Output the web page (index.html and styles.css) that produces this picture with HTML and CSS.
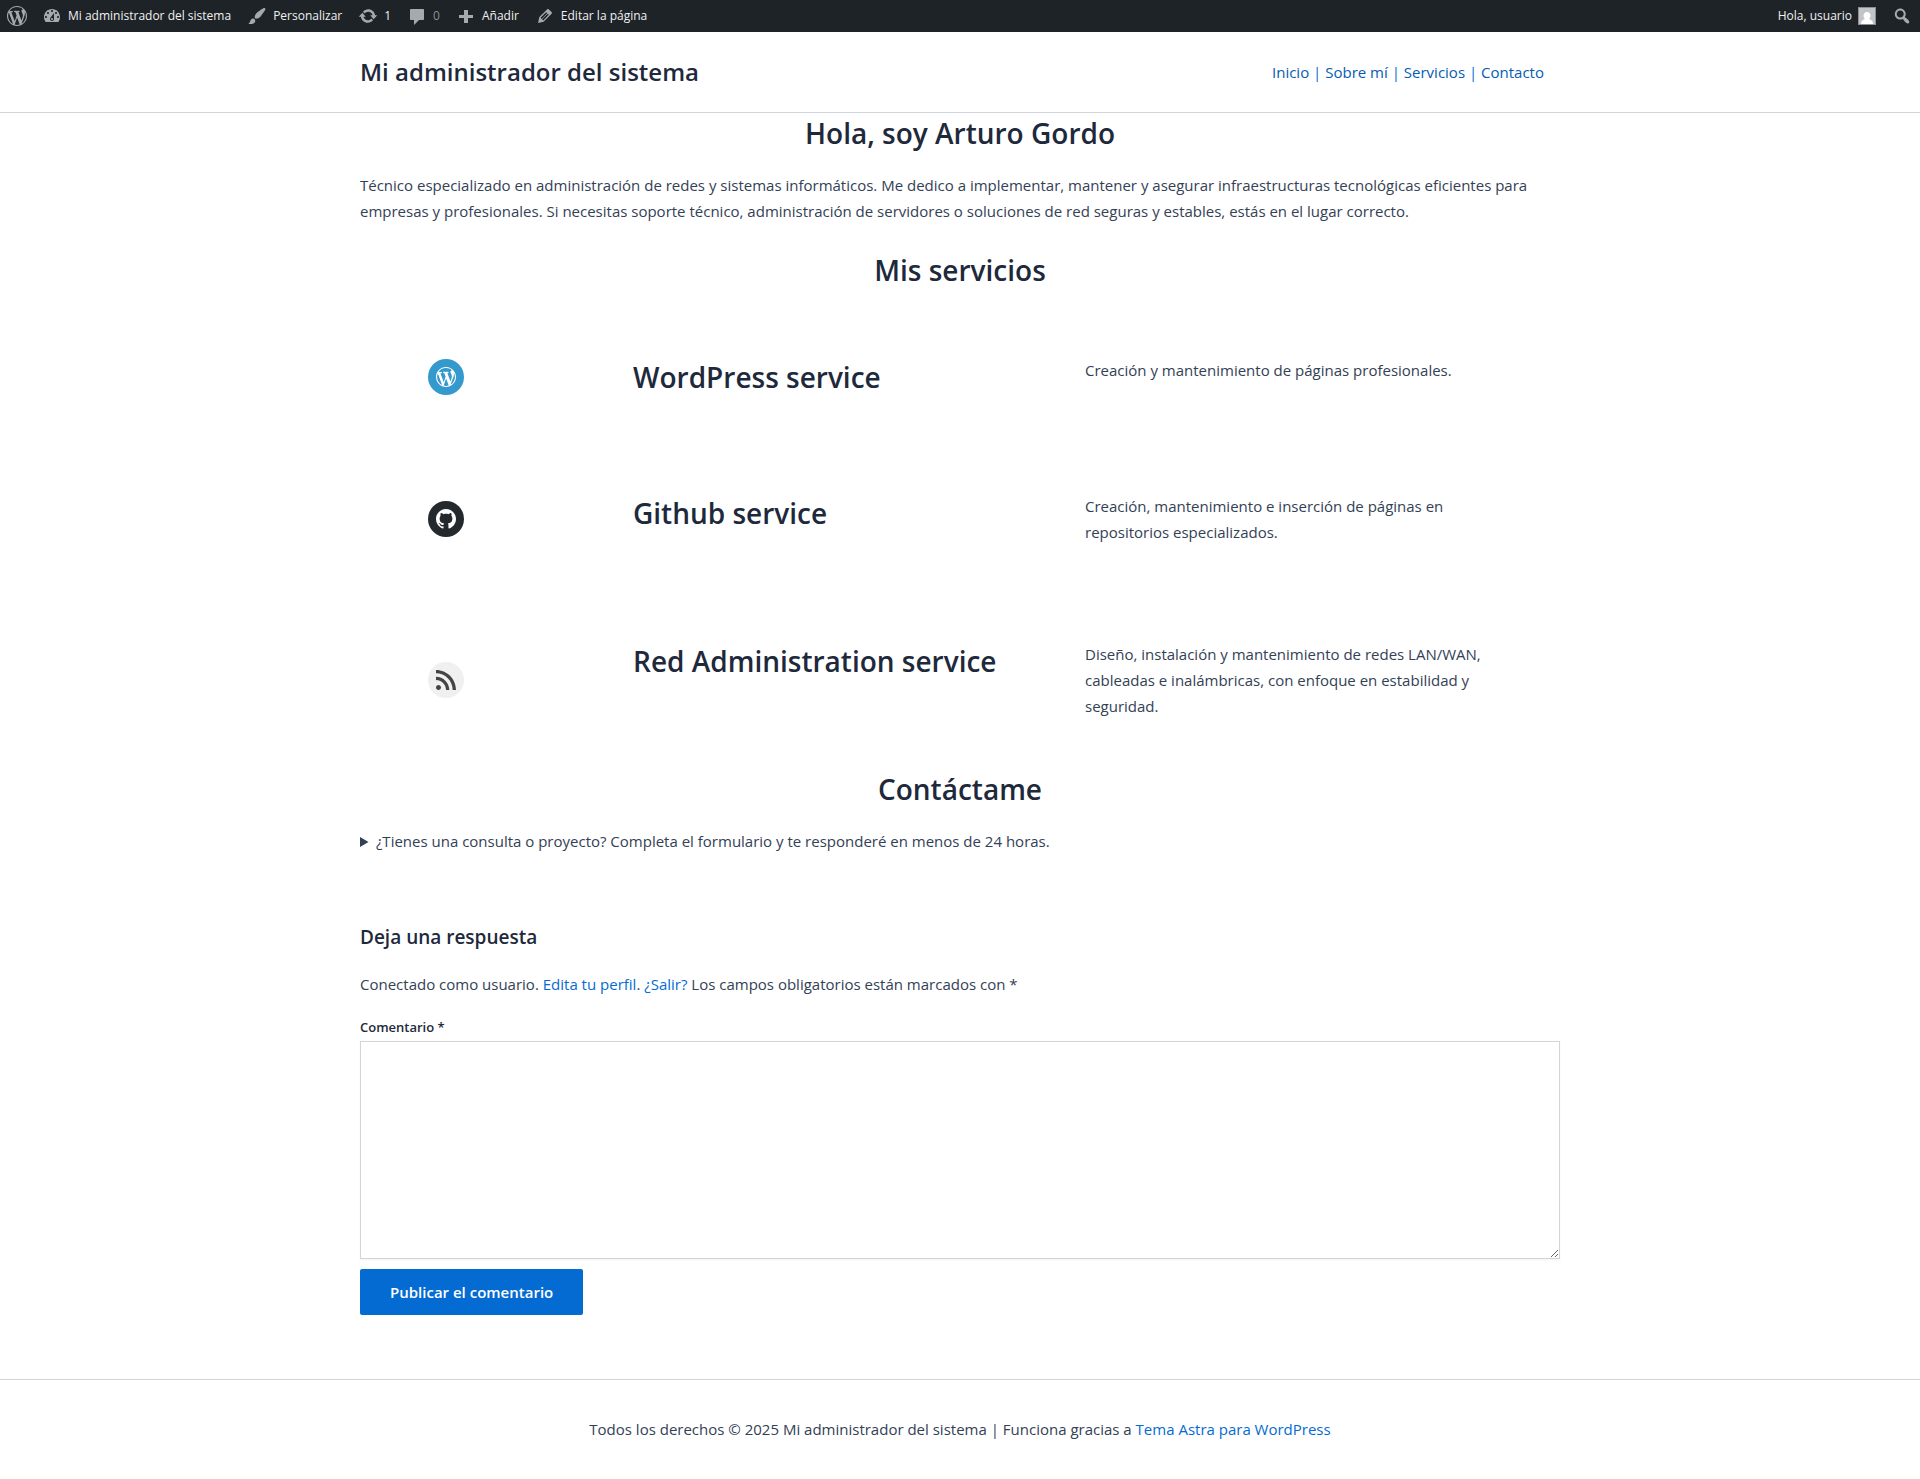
FILE: index.html
```html
<!DOCTYPE html>
<html lang="es">
<head>
<meta charset="utf-8">
<meta name="viewport" content="width=device-width, initial-scale=1">
<title>Mi administrador del sistema</title>
<link rel="stylesheet" href="styles.css">
</head>
<body>
<nav class="adminbar" aria-label="Barra de herramientas">
  <a class="adminbar-item adminbar-logo" href="#" aria-label="Acerca de WordPress"><svg class="adminbar-icon" viewBox="0 0 20 20"><path d="M20 10c0-5.51-4.49-10-10-10C4.48 0 0 4.49 0 10c0 5.52 4.48 10 10 10 5.51 0 10-4.48 10-10zM7.78 15.37L4.37 6.22c.55-.02 1.17-.08 1.17-.08.5-.06.44-1.13-.06-1.11 0 0-1.45.11-2.37.11-.18 0-.37 0-.58-.01C4.12 2.69 6.87 1.11 10 1.11c2.33 0 4.45.87 6.05 2.34-.68-.11-1.65.39-1.65 1.58 0 .74.45 1.36.9 2.1.35.61.55 1.36.55 2.46 0 1.49-1.4 5-1.4 5l-3.03-8.37c.54-.02.82-.17.82-.17.5-.05.44-1.25-.06-1.22 0 0-1.44.12-2.38.12-.87 0-2.33-.12-2.33-.12-.5-.03-.56 1.2-.06 1.22l.92.08 1.26 3.41zM17.41 10c.24-.64.74-1.87.43-4.25.7 1.29 1.05 2.71 1.05 4.25 0 3.29-1.73 6.24-4.4 7.78.97-2.59 1.94-5.2 2.92-7.78zM6.1 18.09C3.12 16.65 1.11 13.53 1.11 10c0-1.3.23-2.48.72-3.59C3.25 10.3 4.67 14.2 6.1 18.09zm4.03-6.63l2.58 6.98c-.86.29-1.76.45-2.71.45-.79 0-1.57-.11-2.29-.33.81-2.38 1.62-4.74 2.42-7.1z"/></svg></a>
  <a class="adminbar-item" href="#"><svg class="adminbar-icon" viewBox="0 0 20 20"><path fill-rule="evenodd" d="M3.76 16h12.48c1.1-1.37 1.76-3.11 1.76-5 0-4.42-3.58-8-8-8s-8 3.58-8 8c0 1.89.66 3.63 1.76 5zM10 4c.55 0 1 .45 1 1s-.45 1-1 1-1-.45-1-1 .45-1 1-1zM6 6c.55 0 1 .45 1 1s-.45 1-1 1-1-.45-1-1 .45-1 1-1zm8 0c.55 0 1 .45 1 1s-.45 1-1 1-1-.45-1-1 .45-1 1-1zm-5.37 5.55L12 7v6c0 1.1-.9 2-2 2s-2-.9-2-2c0-.57.24-1.08.63-1.45zM4 10c.55 0 1 .45 1 1s-.45 1-1 1-1-.45-1-1 .45-1 1-1zm12 0c.55 0 1 .45 1 1s-.45 1-1 1-1-.45-1-1 .45-1 1-1zm-5 3c0-.55-.45-1-1-1s-1 .45-1 1 .45 1 1 1 1-.45 1-1z"/></svg>Mi administrador del sistema</a>
  <a class="adminbar-item" href="#"><svg class="adminbar-icon" viewBox="0 0 20 20"><path d="M18.33 3.57s.27-.8-.31-1.36c-.53-.52-1.22-.24-1.22-.24-.61.3-5.76 3.47-7.67 5.57-.86.96-2.06 3.79-1.09 4.82.92.98 3.96-.17 4.79-1 2.06-2.06 5.21-7.17 5.5-7.79zM1.4 17.65c2.37-1.56 1.46-3.41 3.23-4.64.93-.65 2.22-.62 3.08.29.63.67.8 2.57-.16 3.46-1.57 1.45-4 1.55-6.15.89z"/></svg>Personalizar</a>
  <a class="adminbar-item" href="#"><svg class="adminbar-icon" viewBox="0 0 20 20"><path d="M10.2 3.28c3.53 0 6.43 2.61 6.92 6h2.08l-3.5 4-3.5-4h2.32c-.45-1.97-2.21-3.45-4.32-3.45-1.45 0-2.73.71-3.54 1.78L4.95 5.66C6.23 4.2 8.11 3.28 10.2 3.28zm-.4 13.44c-3.52 0-6.43-2.61-6.92-6H.8l3.5-4c1.17 1.33 2.33 2.67 3.5 4H5.48c.45 1.97 2.21 3.45 4.32 3.45 1.45 0 2.73-.71 3.54-1.78l1.71 1.95c-1.28 1.46-3.15 2.38-5.25 2.38z"/></svg>1</a>
  <a class="adminbar-item adminbar-item-muted" href="#"><svg class="adminbar-icon" viewBox="0 0 20 20"><path d="M4 3h12c.55 0 1 .45 1 1v9c0 .55-.45 1-1 1h-4l-5 5v-5H4c-.55 0-1-.45-1-1V4c0-.55.45-1 1-1z"/></svg>0</a>
  <a class="adminbar-item" href="#"><svg class="adminbar-icon" viewBox="0 0 20 20"><path d="M17 9v3h-5v5H8v-5H3V9h5V4h4v5z"/></svg>Añadir</a>
  <a class="adminbar-item" href="#"><svg class="adminbar-icon" viewBox="0 0 20 20"><path d="M13.89 3.39l2.71 2.72c.46.46.42 1.24.03 1.64l-8.01 8.02-5.56 1.16 1.16-5.58s7.6-7.63 7.99-8.03c.39-.39 1.22-.39 1.68.07zm-2.73 2.79l-5.59 5.61 1.11 1.11 5.54-5.65zm-2.97 8.23l5.58-5.6-1.07-1.08-5.59 5.6z"/></svg>Editar la página</a>
  <a class="adminbar-item adminbar-account" href="#">Hola, usuario<svg class="avatar" viewBox="0 0 18 18"><rect width="18" height="18" fill="#8c8f94"/><rect x="1" y="1" width="16" height="16" fill="#c3c4c7"/><path fill="#fff" d="M9 5c2 0 3.500 1.600 3.500 3.600 0 1.500-.6 2.700-1.500 3.400 2.400.7 4 2 4 5H3c0-3 1.600-4.300 4-5-.9-.7-1.500-1.900-1.500-3.400C5.500 6.600 7 5 9 5z"/></svg></a>
  <a class="adminbar-item" href="#" aria-label="Buscar"><svg class="adminbar-icon" viewBox="0 0 20 20"><path d="M12.140 4.180c1.870 1.870 2.110 4.750.72 6.890.12.1.22.21.36.31.2.16.47.36.81.59.34.24.56.39.66.47.42.31.73.57.94.78.32.32.6.65.84 1 .25.35.44.69.59 1.040.14.35.21.68.18 1-.02.32-.14.59-.36.81s-.49.34-.81.36c-.31.02-.65-.04-.99-.19-.35-.14-.7-.34-1.040-.59-.35-.24-.68-.52-1-.84-.21-.21-.47-.52-.77-.93-.1-.13-.25-.35-.47-.66-.22-.32-.4-.57-.56-.78-.16-.2-.29-.35-.44-.5-2.070 1.090-4.690.76-6.440-.98-2.140-2.150-2.140-5.640 0-7.780 2.150-2.150 5.630-2.150 7.780 0zm-1.410 6.360c1.360-1.370 1.360-3.580 0-4.950-1.370-1.370-3.590-1.370-4.950 0-1.370 1.370-1.370 3.580 0 4.950 1.360 1.370 3.580 1.370 4.950 0z"/></svg></a>
</nav>

<header class="site-header">
  <div class="container site-header-inner">
    <a class="site-title" href="#">Mi administrador del sistema</a>
    <nav class="site-nav" aria-label="Principal"><a href="#">Inicio</a> | <a href="#">Sobre mí</a> | <a href="#">Servicios</a> | <a href="#">Contacto</a></nav>
  </div>
</header>

<main class="container">
  <h2 class="section-title">Hola, soy Arturo Gordo</h2>
  <p class="intro">Técnico especializado en administración de redes y sistemas informáticos. Me dedico a implementar, mantener y asegurar infraestructuras tecnológicas eficientes para empresas y profesionales. Si necesitas soporte técnico, administración de servidores o soluciones de red seguras y estables, estás en el lugar correcto.</p>

  <h2 class="section-title">Mis servicios</h2>
  <div class="services">
    <div class="service">
      <a class="social social-wordpress" href="#" aria-label="WordPress"><svg viewBox="-2 -2 24 24"><path d="M20 10c0-5.51-4.49-10-10-10C4.48 0 0 4.49 0 10c0 5.52 4.48 10 10 10 5.51 0 10-4.48 10-10zM7.78 15.37L4.37 6.22c.55-.02 1.17-.08 1.17-.08.5-.06.44-1.13-.06-1.11 0 0-1.45.11-2.37.11-.18 0-.37 0-.58-.01C4.12 2.69 6.87 1.11 10 1.11c2.33 0 4.45.87 6.05 2.34-.68-.11-1.65.39-1.65 1.58 0 .74.45 1.36.9 2.1.35.61.55 1.36.55 2.46 0 1.49-1.4 5-1.4 5l-3.03-8.37c.54-.02.82-.17.82-.17.5-.05.44-1.25-.06-1.22 0 0-1.44.12-2.38.12-.87 0-2.33-.12-2.33-.12-.5-.03-.56 1.2-.06 1.22l.92.08 1.26 3.41zM17.41 10c.24-.64.74-1.87.43-4.25.7 1.29 1.05 2.71 1.05 4.25 0 3.29-1.73 6.24-4.4 7.78.97-2.59 1.94-5.2 2.92-7.78zM6.1 18.09C3.12 16.65 1.11 13.53 1.11 10c0-1.3.23-2.48.72-3.59C3.25 10.3 4.67 14.2 6.1 18.09zm4.03-6.63l2.58 6.98c-.86.29-1.76.45-2.71.45-.79 0-1.57-.11-2.29-.33.81-2.38 1.62-4.74 2.42-7.1z"/></svg></a>
      <h2 class="service-title">WordPress service</h2>
      <p class="service-text">Creación y mantenimiento de páginas profesionales.</p>
    </div>
    <div class="service">
      <a class="social social-github" href="#" aria-label="GitHub"><svg viewBox="0 0 24 24"><path d="M12,2C6.477,2,2,6.477,2,12c0,4.419,2.865,8.166,6.839,9.489c0.500,0.090,0.682-0.218,0.682-0.484c0-0.236-0.009-0.866-0.014-1.699c-2.782,0.602-3.369-1.340-3.369-1.340c-0.455-1.157-1.110-1.465-1.110-1.465c-0.909-0.620,0.069-0.608,0.069-0.608c1.004,0.071,1.532,1.030,1.532,1.030c0.891,1.529,2.341,1.089,2.910,0.833c0.091-0.647,0.349-1.086,0.635-1.337c-2.220-0.251-4.555-1.111-4.555-4.943c0-1.091,0.390-1.984,1.030-2.682C6.546,8.540,6.202,7.524,6.746,6.148c0,0,0.840-0.269,2.750,1.025C10.295,6.950,11.150,6.840,12,6.836c0.850,0.004,1.705,0.114,2.504,0.336c1.909-1.294,2.748-1.025,2.748-1.025c0.546,1.376,0.202,2.394,0.100,2.646c0.640,0.699,1.026,1.591,1.026,2.682c0,3.841-2.337,4.687-4.565,4.935c0.359,0.307,0.679,0.917,0.679,1.852c0,1.335-0.012,2.415-0.012,2.741c0,0.269,0.180,0.579,0.688,0.481C19.138,20.161,22,16.416,22,12C22,6.477,17.523,2,12,2z"/></svg></a>
      <h2 class="service-title">Github service</h2>
      <p class="service-text">Creación, mantenimiento e inserción de páginas en repositorios especializados.</p>
    </div>
    <div class="service">
      <a class="social social-feed" href="#" aria-label="Feed RSS"><svg viewBox="0 0 24 24"><path d="M2,8.667V12c5.515,0,10,4.485,10,10h3.333C15.333,14.637,9.363,8.667,2,8.667z M2,2v3.333c9.190,0,16.667,7.477,16.667,16.667H22C22,10.955,13.045,2,2,2z M4.500,17C3.118,17,2,18.120,2,19.500S3.118,22,4.500,22S7,20.880,7,19.500S5.882,17,4.500,17z"/></svg></a>
      <h2 class="service-title">Red Administration service</h2>
      <p class="service-text">Diseño, instalación y mantenimiento de redes LAN/WAN, cableadas e inalámbricas, con enfoque en estabilidad y seguridad.</p>
    </div>
  </div>

  <h2 class="section-title">Contáctame</h2>
  <details class="contact">
    <summary>¿Tienes una consulta o proyecto? Completa el formulario y te responderé en menos de 24 horas.</summary>
  </details>

  <section class="respond">
    <h3 class="respond-title">Deja una respuesta</h3>
    <form class="comment-form">
      <p class="logged-in">Conectado como usuario. <a href="#">Edita tu perfil</a>. <a href="#">¿Salir?</a> Los campos obligatorios están marcados con *</p>
      <label class="comment-label" for="comment">Comentario *</label>
      <textarea class="comment-box" id="comment" name="comment" rows="8" required></textarea>
      <button class="submit" type="submit">Publicar el comentario</button>
    </form>
  </section>
</main>

<footer class="site-footer">
  <p>Todos los derechos © 2025 Mi administrador del sistema | Funciona gracias a <a href="#">Tema Astra para WordPress</a></p>
</footer>
</body>
</html>
```
FILE: styles.css
```css
*, *::before, *::after { box-sizing: border-box; }

body {
  margin: 0;
  background: #fff;
  color: #334155;
  font: 15px/26px "Segoe UI", "Open Sans", "Noto Sans", sans-serif;
}

h2, h3, p { margin: 0; }
a { color: #046bd2; text-decoration: none; }

.container {
  max-width: 1240px;
  margin: 0 auto;
  padding: 0 20px;
}

.adminbar {
  display: flex;
  height: 32px;
  background: #1d2327;
  font-size: 12px;
  line-height: 32px;
}
.adminbar-item {
  display: flex;
  align-items: center;
  gap: 6px;
  padding: 0 8px;
  color: #f0f0f1;
}
.adminbar-logo { padding: 0 7px; }
.adminbar-item-muted { color: #8c9196; }
.adminbar-icon {
  width: 20px;
  height: 20px;
  fill: #a7aaad;
}
.adminbar-account { margin-left: auto; }
.avatar { width: 18px; height: 18px; }

.site-header { border-bottom: 1px solid #d1d5db; }
.site-header-inner {
  display: flex;
  align-items: center;
  justify-content: space-between;
  min-height: 80px;
}
.site-title {
  color: #1e293b;
  font-size: 24px;
  font-weight: 600;
}
.site-nav {
  padding-right: 16px;
  color: #046bd2;
}
.site-nav a { color: #045cb4; }

.section-title,
.service-title {
  color: #1e293b;
  font-size: 28px;
  font-weight: 600;
  line-height: 40px;
}
.section-title {
  margin-bottom: 19px;
  text-align: center;
}
.intro { margin-bottom: 26px; }

.services {
  display: grid;
  gap: 96px;
  padding: 48px 0 50px;
}
.service {
  display: grid;
  grid-template-columns: 225fr 452fr 523fr;
}
.service-title { padding-left: 48px; }
.service-text { padding: 0 48px; }

.social {
  display: flex;
  align-items: center;
  justify-content: center;
  align-self: center;
  width: 36px;
  height: 36px;
  margin-left: 68px;
  border-radius: 50%;
}
.social svg {
  width: 24px;
  height: 24px;
  fill: currentColor;
}
.social-wordpress { background: #3499cd; color: #fff; }
.social-github { background: #24292d; color: #fff; }
.social-feed { background: #f0f0f0; color: #444; }

.respond { padding: 68px 0 64px; }
.respond-title {
  margin-bottom: 19px;
  color: #1e293b;
  font-size: 19px;
  font-weight: 600;
  line-height: 30px;
}
.logged-in { margin-bottom: 18px; }
.comment-label {
  display: block;
  padding-bottom: 2px;
  color: #1e293b;
  font-size: 13px;
  font-weight: 600;
  line-height: 24px;
}
.comment-box {
  display: block;
  width: 100%;
  height: 218px;
  margin-bottom: 10px;
  padding: 12px;
  border: 1px solid #d1d5db;
  border-radius: 0;
  background: #fff;
  box-shadow: 0 1px 2px rgba(0, 0, 0, .05);
  color: inherit;
  font: inherit;
}
.submit {
  padding: 10px 30px;
  border: 0;
  border-radius: 2px;
  background: #046bd2;
  color: #fff;
  font: inherit;
  font-weight: 600;
}

.site-footer {
  padding: 36px 20px 38px;
  border-top: 1px solid #d1d5db;
  text-align: center;
}
```
